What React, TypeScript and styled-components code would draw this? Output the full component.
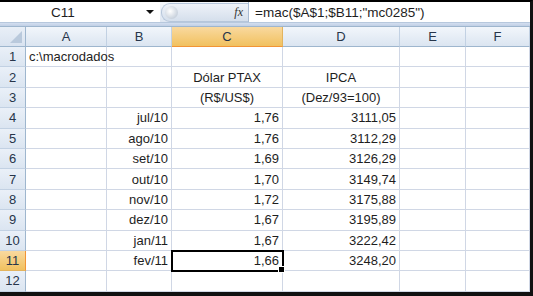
import { FunctionComponent } from "react";
import styled, { createGlobalStyle } from "styled-components";

const GlobalStyle = createGlobalStyle`
  html, body {
    margin: 0;
    padding: 0;
    background: #ffffff;
  }
`;

const COLS = ["A", "B", "C", "D", "E", "F"];
const COL_WIDTHS = "26px 81px 65px 111px 117px 66px 64px";

type Row = { b?: string; c?: string; d?: string; align?: "center" | "right" };

const ROWS: Row[] = [
  {},
  { c: "Dólar PTAX", d: "IPCA", align: "center" },
  { c: "(R$/US$)", d: "(Dez/93=100)", align: "center" },
  { b: "jul/10", c: "1,76", d: "3111,05" },
  { b: "ago/10", c: "1,76", d: "3112,29" },
  { b: "set/10", c: "1,69", d: "3126,29" },
  { b: "out/10", c: "1,70", d: "3149,74" },
  { b: "nov/10", c: "1,72", d: "3175,88" },
  { b: "dez/10", c: "1,67", d: "3195,89" },
  { b: "jan/11", c: "1,67", d: "3222,42" },
  { b: "fev/11", c: "1,66", d: "3248,20" },
  {},
];

const Window = styled.div`
  width: 533px;
  height: 296px;
  box-sizing: border-box;
  border-top: 2px solid #000;
  border-right: 3px solid #111;
  border-bottom: 4px solid #111;
  overflow: hidden;
  font-family: "Liberation Sans", Arial, sans-serif;
  font-size: 13px;
  color: #1e1e1e;
  background: #fff;
  display: flex;
  flex-direction: column;
`;

const FormulaBar = styled.div`
  flex-shrink: 0;
  height: 20px;
  display: flex;
  align-items: stretch;
  background: #fff;
  border-bottom: 1px solid #b7c8dd;
`;

const NameBox = styled.div`
  width: 160px;
  display: flex;
  align-items: center;
  background: #fff;
`;

const NameText = styled.span`
  flex: 1;
  text-align: center;
  padding-right: 20px;
  font-size: 13.5px;
`;

const DropArrow = styled.span`
  width: 0;
  height: 0;
  margin-right: 6px;
  border-left: 4px solid transparent;
  border-right: 4px solid transparent;
  border-top: 4px solid #111;
`;

const PillArea = styled.div`
  width: 88px;
  display: flex;
  align-items: center;
  background: linear-gradient(#f5f8fc, #dfe7f2);
  border-right: 1px solid #a9bcd4;
`;

const Pill = styled.div`
  flex: 1;
  height: 17px;
  margin-left: 1px;
  border-radius: 9px 0 0 9px;
  background: linear-gradient(#eef2f8, #d5dfec);
  border: 1px solid #b6c6da;
  border-right: none;
  display: flex;
  align-items: center;
  justify-content: space-between;
  padding: 0 5px 0 3px;
`;

const Knob = styled.span`
  width: 13px;
  height: 13px;
  border-radius: 50%;
  background: radial-gradient(circle at 40% 40%, #ffffff, #c9d2dd 70%, #aeb8c6);
`;

const Fx = styled.span`
  font-family: "Liberation Serif", "Times New Roman", serif;
  font-style: italic;
  font-size: 12px;
  color: #333;
`;

const FormulaText = styled.div`
  flex: 1;
  display: flex;
  align-items: center;
  padding-left: 6px;
  font-size: 13.5px;
  background: #fff;
  white-space: nowrap;
`;

const Strip = styled.div`
  flex-shrink: 0;
  height: 3px;
  background: linear-gradient(#d3def0, #c1d0e5);
  border-bottom: 1px solid #9eb6ce;
`;

const Sheet = styled.div`
  flex-shrink: 0;
  display: grid;
  grid-template-columns: ${COL_WIDTHS};
  grid-template-rows: 20px repeat(12, 20.4px);
`;

const Corner = styled.div`
  background: linear-gradient(#e9eff7, #d9e3f0);
  border-right: 1px solid #9eb6ce;
  border-bottom: 1px solid #9eb6ce;
  box-sizing: border-box;
  position: relative;
  &::after {
    content: "";
    position: absolute;
    right: 3px;
    bottom: 3px;
    width: 0;
    height: 0;
    border-left: 12px solid transparent;
    border-bottom: 12px solid #b9c9dc;
  }
`;

const ColHeader = styled.div<{ $active?: boolean }>`
  box-sizing: border-box;
  display: flex;
  align-items: center;
  justify-content: center;
  color: #27354a;
  font-size: 13px;
  border-right: 1px solid ${(p) => (p.$active ? "#e3b45e" : "#c2d1e3")};
  border-bottom: 1px solid ${(p) => (p.$active ? "#f29436" : "#9eb6ce")};
  background: ${(p) =>
    p.$active
      ? "linear-gradient(#f9d99f, #f1c15f)"
      : "linear-gradient(#f2f6fb, #dbe5f1)"};
`;

const RowHeader = styled.div<{ $active?: boolean }>`
  box-sizing: border-box;
  display: flex;
  align-items: center;
  justify-content: center;
  color: #27354a;
  font-size: 13px;
  border-right: 1px solid ${(p) => (p.$active ? "#f29436" : "#9eb6ce")};
  border-bottom: 1px solid ${(p) => (p.$active ? "#e3b45e" : "#c2d1e3")};
  background: ${(p) =>
    p.$active
      ? "linear-gradient(#f9d99f, #f1c15f)"
      : "linear-gradient(#eaf0f8, #dbe5f1)"};
`;

const Cell = styled.div<{ $align?: "left" | "center" | "right"; $selected?: boolean }>`
  box-sizing: border-box;
  display: flex;
  align-items: center;
  justify-content: ${(p) =>
    p.$align === "right" ? "flex-end" : p.$align === "center" ? "center" : "flex-start"};
  padding: 0 3px;
  white-space: nowrap;
  overflow: visible;
  border-right: 1px solid #d0d7e5;
  border-bottom: 1px solid #d0d7e5;
  position: relative;
  ${(p) =>
    p.$selected &&
    `
    outline: 2px solid #000;
    outline-offset: -1px;
    z-index: 1;
  `}
`;

const FillHandle = styled.span`
  position: absolute;
  right: -3px;
  bottom: -3px;
  width: 5px;
  height: 5px;
  background: #000;
  border: 1px solid #fff;
`;

const MenuSheet: FunctionComponent = () => {
  return (
    <Window>
      <FormulaBar>
        <NameBox>
          <NameText>C11</NameText>
          <DropArrow />
        </NameBox>
        <PillArea>
          <Pill>
            <Knob />
            <Fx>fx</Fx>
          </Pill>
        </PillArea>
        <FormulaText>=mac($A$1;$B11;"mc0285")</FormulaText>
      </FormulaBar>
      <Strip />
      <Sheet>
        <Corner />
        {COLS.map((c) => (
          <ColHeader key={c} $active={c === "C"}>
            {c}
          </ColHeader>
        ))}
        {ROWS.map((r, i) => {
          const n = i + 1;
          const align = r.align ?? "right";
          return [
            <RowHeader key={`h${n}`} $active={n === 11}>
              {n}
            </RowHeader>,
            <Cell key={`a${n}`}>{n === 1 ? "c:\\macrodados" : ""}</Cell>,
            <Cell key={`b${n}`} $align="right">
              {r.b}
            </Cell>,
            <Cell key={`c${n}`} $align={align} $selected={n === 11}>
              {r.c}
              {n === 11 && <FillHandle />}
            </Cell>,
            <Cell key={`d${n}`} $align={align}>
              {r.d}
            </Cell>,
            <Cell key={`e${n}`} />,
            <Cell key={`f${n}`} />,
          ];
        })}
      </Sheet>
    </Window>
  );
};

export default function App() {
  return (
    <>
      <GlobalStyle />
      <MenuSheet />
    </>
  );
}
